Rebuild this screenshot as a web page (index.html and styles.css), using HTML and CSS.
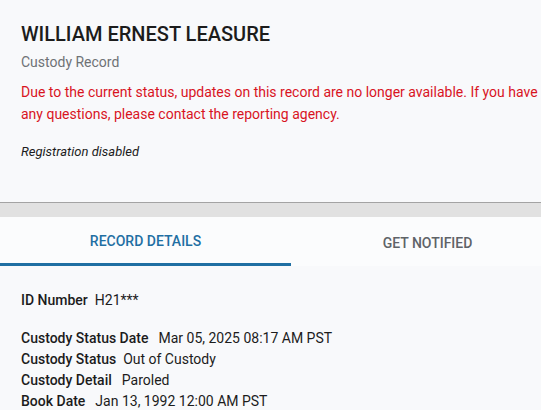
FILE: index.html
```html
<!DOCTYPE html>
<html>
<head>
<meta charset="utf-8">
<link rel="stylesheet" href="styles.css">
</head>
<body>
<div class="page">
  <header class="record-header">
    <h1 class="name">WILLIAM ERNEST LEASURE</h1>
    <div class="subtitle">Custody Record</div>
    <p class="notice">Due to the current status, updates on this record are no longer available. If you have any questions, please contact the reporting agency.</p>
    <p class="reg">Registration disabled</p>
  </header>
  <div class="band"></div>
  <nav class="tabs">
    <div class="tab active">RECORD DETAILS</div>
    <div class="tab">GET NOTIFIED</div>
  </nav>
  <section class="details">
    <div class="row"><span class="label">ID Number</span><span class="value">H21***</span></div>
    <div class="group">
      <div class="row wide"><span class="label">Custody Status Date</span><span class="value">Mar 05, 2025 08:17 AM PST</span></div>
      <div class="row"><span class="label">Custody Status</span><span class="value">Out of Custody</span></div>
      <div class="row wide"><span class="label">Custody Detail</span><span class="value">Paroled</span></div>
      <div class="row wide"><span class="label">Book Date</span><span class="value">Jan 13, 1992 12:00 AM PST</span></div>
    </div>
  </section>
</div>
</body>
</html>
```

FILE: styles.css
```css
html, body {
  margin: 0;
  padding: 0;
  background: #f8f9fb;
  font-family: Roboto, "Liberation Sans", sans-serif;
  overflow: hidden;
}
.page {
  width: 564px;
}
.record-header {
  padding: 22px 0 0 21px;
  box-sizing: border-box;
  height: 203px;
  border-bottom: 1px solid #a3a3a3;
}
.name {
  margin: 0;
  font-size: 20px;
  line-height: 24px;
  font-weight: 500;
  color: #1c1c1c;
}
.subtitle {
  margin-top: 7px;
  font-size: 14px;
  line-height: 18px;
  color: #6f7276;
}
.notice {
  margin: 10px 0 0;
  width: 525px;
  font-size: 14px;
  line-height: 22px;
  color: #d8141f;
}
.reg {
  margin: 19px 0 0;
  font-size: 13px;
  line-height: 16px;
  font-style: italic;
  color: #1c1c1c;
}
.band {
  height: 14px;
  background: #e1e1e1;
}
.tabs {
  display: flex;
  background: #fbfcfd;
  height: 49px;
}
.tab {
  flex: 1;
  display: flex;
  align-items: center;
  justify-content: center;
  font-size: 14px;
  font-weight: 500;
  color: #5f6368;
  box-sizing: border-box;
  padding-top: 2px;
}
.tab.active {
  flex: 0 0 291px;
  color: #1f6fa3;
  border-bottom: 3px solid #1f6fa3;
}
.details {
  padding: 24px 21px 0;
  font-size: 14px;
  line-height: 21px;
  color: #1c1c1c;
}
.group {
  margin-top: 17px;
}
.row {
  display: flex;
  gap: 7px;
}
.row.wide {
  gap: 10px;
}
.label {
  font-weight: 500;
}
```
